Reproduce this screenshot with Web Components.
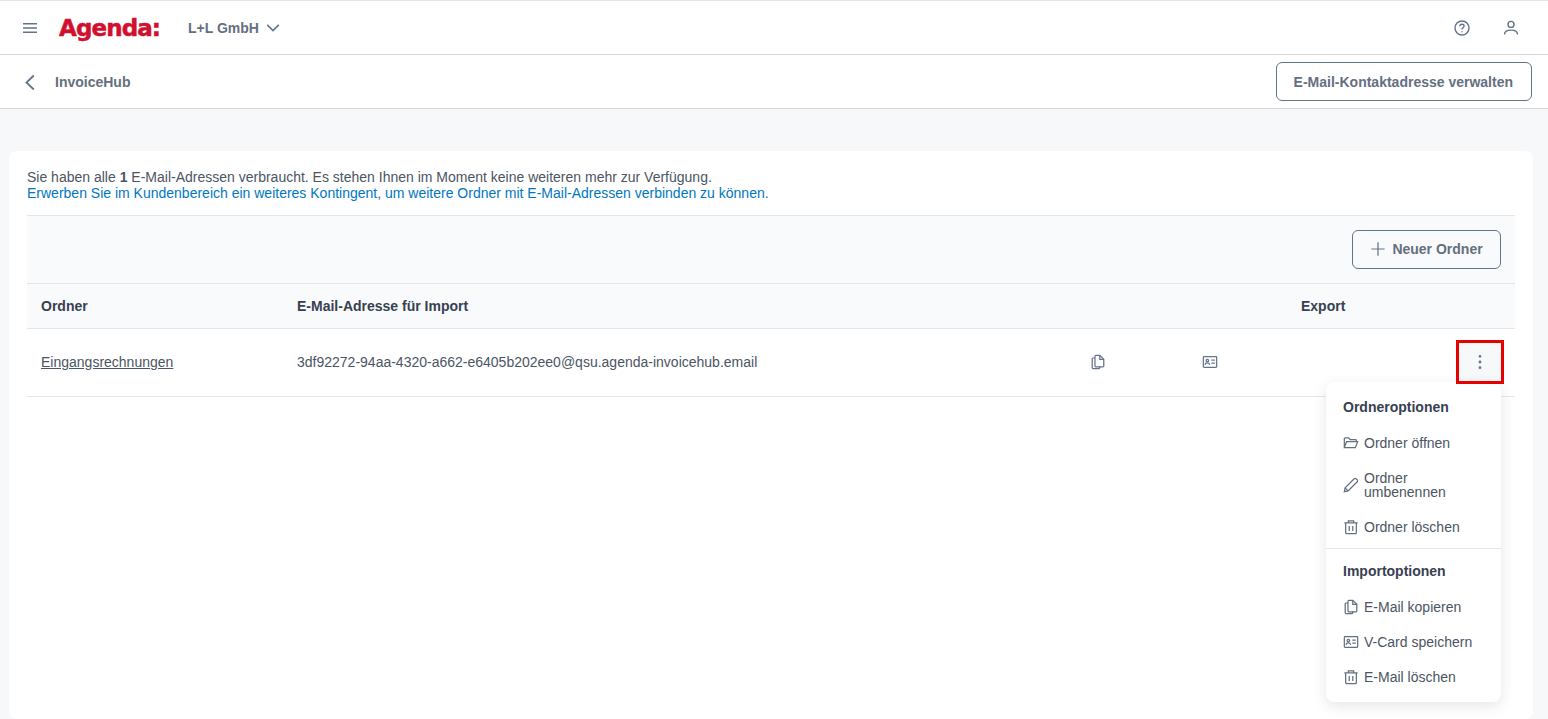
<!DOCTYPE html>
<html lang="de">
<head>
<meta charset="utf-8">
<title>InvoiceHub</title>
<style>
  html, body { margin: 0; height: 719px; overflow: hidden; }
  body { background: #f7f8fa; font: 14px/16px "Liberation Sans", Arial, sans-serif; color: #4b5563; }
</style>
</head>
<body>
<inv-app></inv-app>
<script>
(function() {
    const ICONS = {
        menu: '<path d="M2 4.700h14M2 9h14M2 13.300h14"/>',
        down: '<path d="M2.500 5.500 9 12l6.500-6.500"/>',
        back: '<path d="M12.800 2.500 5.500 9.500l7.300 7"/>',
        help: '<circle cx="9" cy="9" r="7"/><path d="M6.900 7.200c0-1.200 1-2 2.100-2s2.100.8 2.100 1.900c0 1.600-2.100 1.700-2.100 3.300"/><path d="M9 12.300v.9"/>',
        user: '<circle cx="9" cy="5.400" r="3"/><path d="M2.500 15.500c0-3 2.600-4.400 6.500-4.400s6.500 1.400 6.500 4.400"/>',
        plus: '<path d="M9 1.500v15M1.500 9h15"/>',
        dots: '<path d="M9 3.300v.01M9 9v.01M9 14.700v.01" stroke-width="2.800" stroke-linecap="round"/>',
        folder: '<path d="M1.500 14V4.200c0-.5.4-.9.9-.9h3.900l1.700 1.800h6c.5 0 .9.4.9.9V7.500"/><path d="M1.500 14.200 4 7.500h12.500l-2.600 6.700z"/>',
        pencil: '<path d="m1.500 16.500.9-4.300L12.600 2c.6-.6 1.500-.6 2.100 0l1.300 1.300c.6.6.6 1.500 0 2.100L5.800 15.600z"/><path d="M2.400 12.200l3.400 3.400"/>',
        trash: '<path d="M1.500 4.300h15M6 4.300V2.200h6v2.100M3 4.300v10.800c0 .8.6 1.400 1.400 1.400h9.200c.8 0 1.400-.6 1.400-1.400V4.300M7 8v5.500M11 8v5.500"/>',
        copy: '<path d="M6.500 1.500H11l4.500 4.500v7.500c0 .5-.4.9-.9.9h-8.100c-.5 0-.9-.4-.9-.9V2.400c0-.5.4-.9.9-.9z"/><path d="M11 1.500V6h4.500"/><path d="M5.600 4.500H3.400c-.5 0-.9.4-.9.9v10.200c0 .5.4.9.9.9h6.700c.5 0 .9-.4.9-.9v-2.200"/>',
        vcard: '<rect x="1.500" y="3" width="15" height="12" rx=".8"/><circle cx="6" cy="7.400" r="1.400"/><path d="M3.400 12.300c.2-1.500 1.200-2.200 2.600-2.200s2.400.7 2.600 2.200M10.500 7h3.900M10.500 10.300h3.900"/>'
    };

    class InvIcon extends HTMLElement {
        constructor() {
            super();
            this.attachShadow({mode: 'open'});
        }

        connectedCallback() {
            const size = this.getAttribute('size') || 14;
            this.shadowRoot.innerHTML = `
                <style>
                  :host { display: inline-flex; flex: none; color: var(--icon-color, #64748b); }
                  svg { display: block; fill: none; stroke: currentColor; stroke-width: ${this.getAttribute('weight') || 1.4}; }
                </style>
                <svg width="${size}" height="${size}" viewBox="0 0 18 18">${ICONS[this.getAttribute('name')] || ''}</svg>
            `;
        }
    }

    const buttonTemplate = document.createElement('template');
    buttonTemplate.innerHTML = `
        <style>
          :host {
            display: inline-flex;
            align-items: center;
            justify-content: center;
            gap: 6px;
            box-sizing: border-box;
            height: 39px;
            padding: 0 18px 0 17px;
            border: 1px solid #64748b;
            border-radius: 6px;
            background: transparent;
            color: #64707f;
            font-weight: 700;
            white-space: nowrap;
          }
        </style>
        <slot></slot>
    `;

    class InvButton extends HTMLElement {
        constructor() {
            super();
            this.attachShadow({mode: 'open'});
            this.shadowRoot.appendChild(buttonTemplate.content.cloneNode(true));
        }
    }

    const topbarTemplate = document.createElement('template');
    topbarTemplate.innerHTML = `
        <style>
          :host {
            display: flex;
            align-items: center;
            box-sizing: border-box;
            height: 55px;
            padding: 0 28px 0 21px;
            background: #fff;
            border-top: 1px solid #e2e4e8;
            border-bottom: 1px solid #d5d7dc;
          }
          .logo {
            margin-left: 20px;
            width: 101px;
            color: #d1102f;
            font: 700 23px/30px "DejaVu Sans", sans-serif;
            letter-spacing: -.9px;
            -webkit-text-stroke: .5px #d1102f;
            white-space: nowrap;
          }
          .company {
            display: flex;
            align-items: center;
            gap: 6px;
            margin-left: 28px;
            color: #64707f;
            font-weight: 700;
          }
          .right { display: flex; gap: 31px; margin-left: auto; }
        </style>
        <inv-icon name="menu" size="18" weight="1.500"></inv-icon>
        <div class="logo">Agenda:</div>
        <div class="company">L+L GmbH <inv-icon name="down" size="16" weight="1.800"></inv-icon></div>
        <div class="right">
          <inv-icon name="help" size="18"></inv-icon>
          <inv-icon name="user" size="18"></inv-icon>
        </div>
    `;

    class InvTopbar extends HTMLElement {
        constructor() {
            super();
            this.attachShadow({mode: 'open'});
            this.shadowRoot.appendChild(topbarTemplate.content.cloneNode(true));
        }
    }

    const subbarTemplate = document.createElement('template');
    subbarTemplate.innerHTML = `
        <style>
          :host {
            display: flex;
            align-items: center;
            box-sizing: border-box;
            height: 54px;
            padding: 0 16px 0 21px;
            background: #fff;
            border-bottom: 1px solid #d5d7dc;
          }
          .title { margin-left: 16px; color: #64707f; font-weight: 700; }
          inv-button { margin-left: auto; }
        </style>
        <inv-icon name="back" size="18" weight="1.800"></inv-icon>
        <div class="title">InvoiceHub</div>
        <inv-button>E-Mail-Kontaktadresse verwalten</inv-button>
    `;

    class InvSubbar extends HTMLElement {
        constructor() {
            super();
            this.attachShadow({mode: 'open'});
            this.shadowRoot.appendChild(subbarTemplate.content.cloneNode(true));
        }
    }

    const rowTemplate = document.createElement('template');
    rowTemplate.innerHTML = `
        <style>
          :host {
            display: grid;
            grid-template-columns: 270px 745px 112px 112px 1fr;
            align-items: center;
            border-bottom: 1px solid #e4e6ea;
          }
          :host([head]) { height: 44px; background: #f9fafb; color: #374151; font-weight: 700; }
          :host(:not([head])) { height: 66px; padding-bottom: 1px; }
        </style>
        <slot></slot>
    `;

    class InvRow extends HTMLElement {
        constructor() {
            super();
            this.attachShadow({mode: 'open'});
            this.shadowRoot.appendChild(rowTemplate.content.cloneNode(true));
        }
    }

    const itemTemplate = document.createElement('template');
    itemTemplate.innerHTML = `
        <style>
          :host {
            display: flex;
            align-items: center;
            gap: 5px;
            min-height: 35px;
            padding: 0 17px;
            line-height: 14px;
            color: #4b5563;
            --icon-color: #64707f;
          }
          :host([multi]) { min-height: 49px; }
        </style>
        <inv-icon size="16"></inv-icon>
        <span><slot></slot></span>
    `;

    class InvMenuItem extends HTMLElement {
        constructor() {
            super();
            this.attachShadow({mode: 'open'});
            const content = itemTemplate.content.cloneNode(true);
            content.querySelector('inv-icon').setAttribute('name', this.getAttribute('icon'));
            this.shadowRoot.appendChild(content);
        }
    }

    const menuTemplate = document.createElement('template');
    menuTemplate.innerHTML = `
        <style>
          :host {
            position: absolute;
            top: 42px;
            left: -130px;
            z-index: 1;
            display: block;
            box-sizing: border-box;
            width: 175px;
            padding-bottom: 8px;
            background: #fff;
            border-radius: 8px;
            box-shadow: 0 4px 14px rgba(40, 50, 70, .12);
          }
          h4 {
            margin: 0;
            padding: 17px 17px 10px;
            font-size: 14px;
            line-height: 16px;
            color: #374151;
          }
          section + section { border-top: 1px solid #e4e6ea; margin-top: 4px; }
          section + section h4 { padding-top: 14px; }
        </style>
        <section>
          <h4>Ordneroptionen</h4>
          <inv-menu-item icon="folder">Ordner öffnen</inv-menu-item>
          <inv-menu-item icon="pencil" multi>Ordner umbenennen</inv-menu-item>
          <inv-menu-item icon="trash">Ordner löschen</inv-menu-item>
        </section>
        <section>
          <h4>Importoptionen</h4>
          <inv-menu-item icon="copy">E-Mail kopieren</inv-menu-item>
          <inv-menu-item icon="vcard">V-Card speichern</inv-menu-item>
          <inv-menu-item icon="trash">E-Mail löschen</inv-menu-item>
        </section>
    `;

    class InvMenu extends HTMLElement {
        constructor() {
            super();
            this.attachShadow({mode: 'open'});
            this.shadowRoot.appendChild(menuTemplate.content.cloneNode(true));
        }
    }

    const kebabTemplate = document.createElement('template');
    kebabTemplate.innerHTML = `
        <style>
          :host {
            position: relative;
            display: flex;
            align-items: center;
            justify-content: center;
            box-sizing: border-box;
            width: 48px;
            height: 44px;
            background: #f7f8f9;
          }
          .mark {
            position: absolute;
            inset: 0;
            z-index: 2;
            border: 3px solid #e60000;
            pointer-events: none;
          }
        </style>
        <inv-icon name="dots" size="18"></inv-icon>
        <inv-menu></inv-menu>
        <div class="mark"></div>
    `;

    class InvKebab extends HTMLElement {
        constructor() {
            super();
            this.attachShadow({mode: 'open'});
            this.shadowRoot.appendChild(kebabTemplate.content.cloneNode(true));
        }
    }

    const cardTemplate = document.createElement('template');
    cardTemplate.innerHTML = `
        <style>
          :host {
            display: block;
            box-sizing: border-box;
            margin: 42px 15px 0 9px;
            padding: 18px 18px 0;
            height: 568px;
            background: #fff;
            border-radius: 8px;
          }
          .info { margin-bottom: 14px; }
          .info a { color: #0077c2; text-decoration: none; }
          .toolbar {
            display: flex;
            justify-content: flex-end;
            align-items: center;
            height: 67px;
            padding-right: 14px;
            background: #f9fafb;
            border-top: 1px solid #e4e6ea;
            border-bottom: 1px solid #e4e6ea;
          }
          .toolbar inv-button { width: 149px; padding: 0 0 1px; --icon-color: #64748b; }
          .first { padding-left: 14px; }
          .export { padding-left: 35px; }
          .link { color: #4b5563; text-decoration: underline; }
          .center { display: flex; justify-content: center; }
          .actions { display: flex; justify-content: flex-end; padding-right: 11px; }
        </style>
        <div class="info">
          Sie haben alle <b>1</b> E-Mail-Adressen verbraucht. Es stehen Ihnen im Moment keine weiteren mehr zur Verfügung.<br>
          <a href="#">Erwerben Sie im Kundenbereich ein weiteres Kontingent, um weitere Ordner mit E-Mail-Adressen verbinden zu können.</a>
        </div>
        <div class="toolbar">
          <inv-button><inv-icon name="plus" size="16"></inv-icon>Neuer Ordner</inv-button>
        </div>
        <inv-row head>
          <div class="first">Ordner</div>
          <div>E-Mail-Adresse für Import</div>
          <div></div>
          <div></div>
          <div class="export">Export</div>
        </inv-row>
        <inv-row>
          <div class="first"><a class="link" href="#">Eingangsrechnungen</a></div>
          <div>3df92272-94aa-4320-a662-e6405b202ee0@qsu.agenda-invoicehub.email</div>
          <div class="center"><inv-icon name="copy" size="16"></inv-icon></div>
          <div class="center"><inv-icon name="vcard" size="16"></inv-icon></div>
          <div class="actions"><inv-kebab></inv-kebab></div>
        </inv-row>
    `;

    class InvCard extends HTMLElement {
        constructor() {
            super();
            this.attachShadow({mode: 'open'});
            this.shadowRoot.appendChild(cardTemplate.content.cloneNode(true));
        }
    }

    const appTemplate = document.createElement('template');
    appTemplate.innerHTML = `
        <style>
          :host { display: block; }
        </style>
        <inv-topbar></inv-topbar>
        <inv-subbar></inv-subbar>
        <inv-card></inv-card>
    `;

    class InvApp extends HTMLElement {
        constructor() {
            super();
            this.attachShadow({mode: 'open'});
            this.shadowRoot.appendChild(appTemplate.content.cloneNode(true));
        }
    }

    window.customElements.define('inv-icon', InvIcon);
    window.customElements.define('inv-button', InvButton);
    window.customElements.define('inv-topbar', InvTopbar);
    window.customElements.define('inv-subbar', InvSubbar);
    window.customElements.define('inv-row', InvRow);
    window.customElements.define('inv-menu-item', InvMenuItem);
    window.customElements.define('inv-menu', InvMenu);
    window.customElements.define('inv-kebab', InvKebab);
    window.customElements.define('inv-card', InvCard);
    window.customElements.define('inv-app', InvApp);
})();
</script>
</body>
</html>
